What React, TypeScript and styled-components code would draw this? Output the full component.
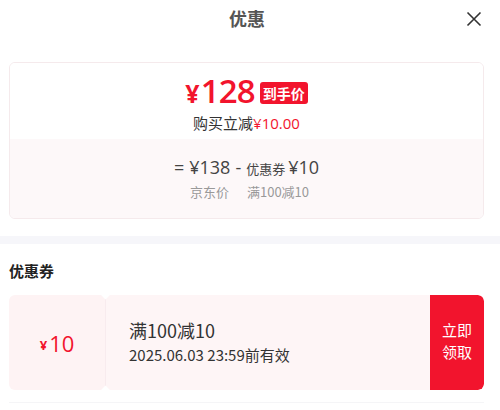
import React from 'react';
import styled, { createGlobalStyle } from 'styled-components';

const GlobalStyle = createGlobalStyle`
    html, body {
        margin: 0;
        padding: 0;
        background: #ffffff;
        font-family: "Noto Sans CJK SC", "Noto Sans", sans-serif;
        color: #333;
    }
`;

const RED = '#f2142d';

const App = () => (
    <Page>
        <GlobalStyle />
        <Header>
            <Title>优惠</Title>
            <CloseButton aria-label="close">
                <svg width="16" height="16" viewBox="0 0 16 16">
                    <path d="M1.5 1.5 L14.5 14.5 M14.5 1.5 L1.5 14.5" stroke="#333" strokeWidth="1.6" fill="none" />
                </svg>
            </CloseButton>
        </Header>

        <PriceCard>
            <PriceTop>
                <PriceLine>
                    <BigPrice>
                        <Yen>¥</Yen>128
                    </BigPrice>
                    <Badge>到手价</Badge>
                </PriceLine>
                <SaveLine>
                    购买立减<RedText>¥10.00</RedText>
                </SaveLine>
            </PriceTop>
            <PriceBottom>
                <Formula>
                    <Num>=</Num>
                    <Num>¥138</Num>
                    <Num>-</Num>
                    <Label>优惠券</Label>
                    <Num>¥10</Num>
                </Formula>
                <Notes>
                    <span>京东价</span>
                    <span>满100减10</span>
                </Notes>
            </PriceBottom>
        </PriceCard>

        <Band />

        <SectionTitle>优惠券</SectionTitle>

        <Coupon>
            <CouponValue>
                <SmallYen>¥</SmallYen>10
            </CouponValue>
            <CouponInfo>
                <CouponName>满100减10</CouponName>
                <CouponDate>2025.06.03 23:59前有效</CouponDate>
            </CouponInfo>
            <ClaimButton>
                立即
                <br />
                领取
            </ClaimButton>
        </Coupon>
        <BottomLine />
    </Page>
);

const Page = styled.div`
    width: 500px;
    height: 410px;
    overflow: hidden;
    background: #fff;
`;

const Header = styled.div`
    position: relative;
    height: 40px;
    display: flex;
    align-items: center;
    justify-content: center;
`;

const Title = styled.div`
    font-size: 18px;
    font-weight: 700;
    color: #555;
    margin-left: -6px;
    margin-top: -5px;
`;

const CloseButton = styled.div`
    position: absolute;
    right: 18px;
    top: 11px;
    width: 16px;
    height: 16px;
    display: flex;
`;

const PriceCard = styled.div`
    margin: 22px 16px 0 9px;
    border: 1px solid #f5eaec;
    border-radius: 6px;
    overflow: hidden;
    height: 155px;
    display: flex;
    flex-direction: column;
`;

const PriceTop = styled.div`
    height: 76px;
    background: #fff;
    display: flex;
    flex-direction: column;
    align-items: center;
    padding-top: 11px;
    box-sizing: border-box;
`;

const PriceLine = styled.div`
    display: flex;
    align-items: center;
    gap: 5px;
    height: 36px;
`;

const BigPrice = styled.div`
    font-family: "Open Sans", "Noto Sans", sans-serif;
    color: ${RED};
    font-size: 33px;
    font-weight: 600;
    line-height: 36px;
    letter-spacing: -0.8px;
`;

const Yen = styled.span`
    font-size: 25px;
    font-weight: 700;
    margin-right: 2px;
`;

const Badge = styled.div`
    background: ${RED};
    color: #fff;
    font-size: 14px;
    font-weight: 700;
    border-radius: 3px;
    padding: 0 3px;
    height: 22px;
    line-height: 22px;
    margin-top: 2px;
`;

const SaveLine = styled.div`
    margin-top: 3px;
    font-size: 15px;
    color: #333;
    line-height: 20px;
`;

const RedText = styled.span`
    color: ${RED};
    font-family: "Open Sans", "Noto Sans", sans-serif;
`;

const PriceBottom = styled.div`
    flex: 1;
    background: #fdf8f9;
    display: flex;
    flex-direction: column;
    align-items: center;
    padding-top: 17px;
    box-sizing: border-box;
`;

const Formula = styled.div`
    display: flex;
    align-items: baseline;
    gap: 5px;
    color: #444;
    line-height: 22px;
`;

const Num = styled.span`
    font-family: "Open Sans", "Noto Sans", sans-serif;
    font-size: 18px;
`;

const Label = styled.span`
    font-size: 13px;
    margin-right: -2px;
`;

const Notes = styled.div`
    display: flex;
    gap: 18px;
    font-size: 13px;
    color: #999;
    margin-top: 2px;
    margin-left: 6px;
`;

const Band = styled.div`
    height: 8px;
    margin-top: 17px;
    background: #f6f6fa;
`;

const SectionTitle = styled.div`
    font-size: 15px;
    font-weight: 700;
    color: #222;
    margin: 16px 0 0 9px;
    line-height: 22px;
`;

const Coupon = styled.div`
    margin: 13px 16px 0 9px;
    height: 95px;
    display: flex;
    border-radius: 6px;
    overflow: hidden;
`;

const CouponValue = styled.div`
    position: relative;
    width: 97px;
    background: #fef3f4;
    color: ${RED};
    font-family: "Open Sans", "Noto Sans", sans-serif;
    font-size: 22px;
    font-weight: 500;
    display: flex;
    align-items: center;
    justify-content: center;
    box-sizing: border-box;
    border-right: 1px solid #f8ebee;
    &::before,
    &::after {
        content: '';
        position: absolute;
        right: -4px;
        width: 7px;
        height: 7px;
        background: #fff;
        transform: rotate(45deg);
    }
    &::before {
        top: -4px;
    }
    &::after {
        bottom: -4px;
    }
`;

const SmallYen = styled.span`
    font-size: 13px;
    font-weight: 700;
    margin-right: 2px;
    margin-top: 4px;
`;

const CouponInfo = styled.div`
    flex: 1;
    background: #fef5f6;
    display: flex;
    flex-direction: column;
    justify-content: center;
    padding-left: 23px;
`;

const CouponName = styled.div`
    font-size: 18px;
    color: #333;
    line-height: 24px;
`;

const CouponDate = styled.div`
    font-size: 15px;
    color: #333;
    line-height: 24px;
    margin-top: 1px;
`;

const ClaimButton = styled.div`
    width: 54px;
    background: ${RED};
    color: #fff;
    font-size: 15px;
    line-height: 22px;
    display: flex;
    align-items: center;
    justify-content: center;
    text-align: center;
    border-radius: 0 6px 6px 0;
    padding-bottom: 4px;
    box-sizing: border-box;
`;

const BottomLine = styled.div`
    height: 1px;
    background: #f5f5f7;
    margin: 12px 16px 0 9px;
`;

export default App;
